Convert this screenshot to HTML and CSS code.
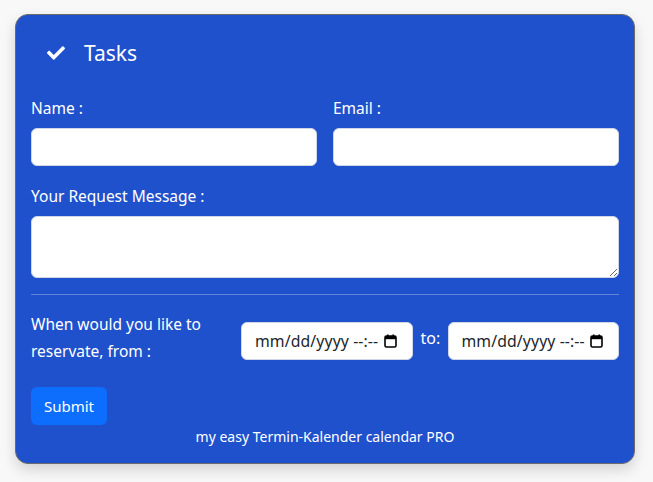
FILE: index.html
```html
<!DOCTYPE html>
<html>
<head>
<meta charset="utf-8">
<link rel="stylesheet" href="styles.css">
</head>
<body>
<div class="card">
  <div class="card-header">
    <svg class="check" width="18" height="18" viewBox="0 0 512 512"><path fill="#fff" d="M173.898 439.404l-166.4-166.4c-9.997-9.997-9.997-26.206 0-36.204l36.203-36.204c9.997-9.998 26.207-9.998 36.204 0L192 312.69 432.095 72.596c9.997-9.997 26.207-9.997 36.204 0l36.203 36.204c9.997 9.997 9.997 26.206 0 36.204l-294.4 294.401c-9.998 9.997-26.207 9.997-36.204-.001z"/></svg>
    <span class="title">Tasks</span>
  </div>
  <div class="row">
    <div class="col">
      <label class="lbl">Name :</label>
      <input class="ctl" type="text">
    </div>
    <div class="col">
      <label class="lbl">Email :</label>
      <input class="ctl" type="text">
    </div>
  </div>
  <div class="group">
    <label class="lbl">Your Request Message :</label>
    <textarea class="ctl area"></textarea>
  </div>
  <hr class="sep">
  <div class="date-row">
    <div class="date-lbl">When would you like to reservate, from :</div>
    <label class="ctl date">
      <input class="date-in" type="text" placeholder="mm/dd/yyyy --:--">
      <svg class="cal" width="13" height="14" viewBox="0 0 13 14"><rect x="1" y="2" width="11" height="11" rx="1.5" fill="none" stroke="#000" stroke-width="1.6"/><rect x="1" y="2" width="11" height="3.2" fill="#000"/><rect x="3" y="0.5" width="1.6" height="2.5" fill="#000"/><rect x="8.4" y="0.5" width="1.6" height="2.5" fill="#000"/></svg>
    </label>
    <span class="to">to:</span>
    <label class="ctl date">
      <input class="date-in" type="text" placeholder="mm/dd/yyyy --:--">
      <svg class="cal" width="13" height="14" viewBox="0 0 13 14"><rect x="1" y="2" width="11" height="11" rx="1.5" fill="none" stroke="#000" stroke-width="1.6"/><rect x="1" y="2" width="11" height="3.2" fill="#000"/><rect x="3" y="0.5" width="1.6" height="2.5" fill="#000"/><rect x="8.4" y="0.5" width="1.6" height="2.5" fill="#000"/></svg>
    </label>
  </div>
  <button class="btn">Submit</button>
  <div class="foot">my easy Termin-Kalender calendar PRO</div>
</div>
</body>
</html>
```
FILE: styles.css
```css
html, body { margin: 0; padding: 0; }
body {
  background: #f8f8f8;
  font-family: "Noto Sans", "Open Sans", sans-serif;
  font-size: 16px;
  color: #fff;
  padding: 14px 18px 18px 15px;
}
.card {
  box-sizing: border-box;
  width: 620px;
  height: 450px;
  background: #1f51cc;
  border: 1px solid #6b6b6b;
  border-radius: 13px;
  padding: 0 15px 16px 15px;
  box-shadow: 0 6px 14px rgba(0,0,0,0.15);
  display: flex;
  flex-direction: column;
}
.card-header {
  display: flex;
  align-items: center;
  height: 74px;
  padding-left: 16px;
  padding-top: 2px;
  box-sizing: border-box;
  margin-bottom: 7px;
}
.check { display: block; margin-right: 19px; }
.title { font-size: 21px; line-height: 26px; }
.row { display: flex; gap: 16px; }
.col { flex: 1; display: flex; flex-direction: column; }
.lbl { display: block; line-height: 24px; margin-bottom: 8px; font-size: 15.5px; }
.ctl {
  box-sizing: border-box;
  height: 38px;
  background: #fff;
  border: 1px solid #cfd6e8;
  border-radius: 6px;
  padding: 6px 12px;
  font-family: "Noto Sans", sans-serif;
  font-size: 15px;
  color: #212529;
  width: 100%;
}
.group { margin-top: 18px; display: flex; flex-direction: column; }
.area { height: 62px; resize: vertical; display: block; }
.sep { border: 0; border-top: 1px solid rgba(255,255,255,0.3); margin: 16px 0 16px 0; width: 100%; }
.date-row { display: flex; align-items: center; gap: 8px; }
.date-lbl { flex: 1; line-height: 27px; font-size: 15.5px; }
.date {
  width: 171.5px;
  flex: none;
  margin-top: 6px;
  padding: 0 15px 0 13px;
  display: flex;
  align-items: center;
  gap: 3px;
}
.date-in {
  flex: 1;
  min-width: 0;
  border: 0;
  outline: 0;
  padding: 0;
  font-family: "Noto Sans", sans-serif;
  font-size: 15.8px;
  letter-spacing: 0.1px;
  color: #212529;
  background: transparent;
}
.date-in::placeholder { color: #212529; opacity: 1; }
.cal { display: block; flex: none; }
.to { font-size: 16px; width: 19px; flex: none; }
.btn {
  align-self: flex-start;
  margin-top: 22px;
  background: #0d6efd;
  color: #fff;
  border: 0;
  border-radius: 6px;
  height: 38px;
  width: 76px;
  font-family: "Noto Sans", sans-serif;
  font-size: 15px;
  padding: 0;
}
.foot { text-align: center; font-size: 14px; line-height: 20px; margin-top: 2px; }
```
